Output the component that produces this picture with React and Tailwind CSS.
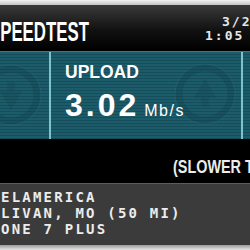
import React from "react";

/* ---------- decorative gauge marks ---------- */

function GaugeMark({ cx, cy, dir }) {
  const up = dir === "up";
  return (
    <svg
      className="pointer-events-none absolute left-0 top-0"
      width="200"
      height="88"
      viewBox="0 0 200 88"
    >
      <circle cx={cx} cy={cy} r="26" fill="none" stroke="#0f3a44" strokeOpacity="0.28" strokeWidth="7" />
      <circle cx={cx} cy={cy} r="30" fill="none" stroke="#4a9aab" strokeOpacity="0.12" strokeWidth="1" />
      {up ? (
        <path
          d={`M${cx} ${cy - 15} L${cx - 11} ${cy + 4} L${cx - 4} ${cy + 4} L${cx - 4} ${cy + 13} L${cx + 4} ${cy + 13} L${cx + 4} ${cy + 4} L${cx + 11} ${cy + 4} Z`}
          fill="#0f3a44"
          fillOpacity="0.22"
        />
      ) : (
        <path
          d={`M${cx} ${cy + 15} L${cx - 11} ${cy - 4} L${cx - 4} ${cy - 4} L${cx - 4} ${cy - 13} L${cx + 4} ${cy - 13} L${cx + 4} ${cy - 4} L${cx + 11} ${cy - 4} Z`}
          fill="#0f3a44"
          fillOpacity="0.22"
        />
      )}
    </svg>
  );
}

const scan =
  "bg-[repeating-linear-gradient(to_bottom,#1c5b6a_0px,#1c5b6a_2px,#164d5a_2px,#164d5a_3px)]";

export default function App() {
  return (
    <div className="flex h-[250px] w-[250px] flex-col overflow-hidden bg-black font-['Liberation_Sans',Arial,sans-serif]">
      {/* top light strip */}
      <div className="h-[5px] shrink-0 bg-[linear-gradient(to_bottom,#f2f2f2,#c4c4c4)]" />

      {/* header */}
      <div className="grid h-[46px] shrink-0 grid-cols-[205px_1fr] bg-[linear-gradient(to_bottom,#3a3a3a,#111_55%,#000)]">
        <div className="min-w-0 pt-[13px]">
          <span className="ml-[-11px] inline-block origin-left scale-x-[0.6] whitespace-nowrap text-[28px] font-bold leading-none text-white">
            SPEEDTEST
          </span>
        </div>
        <div className="whitespace-nowrap pt-[10px] font-['DejaVu_Sans_Mono',monospace] text-[13px] font-bold leading-[14px] tracking-[2px] text-[#e6e6e6]">
          <div className="ml-[17px]">3/21/17</div>
          <div>1:05 PM</div>
        </div>
      </div>

      {/* result panel */}
      <div className={`flex h-[88px] shrink-0 border-t border-[#2f7d8d] ${scan}`}>
        <div className="relative w-[49px] shrink-0 overflow-hidden">
          <GaugeMark cx={11} cy={43} dir="down" />
        </div>
        <div className="w-[2px] shrink-0 bg-[#7cc3d0]" />
        <div className="relative w-[190px] shrink-0 overflow-hidden pl-[14px] pt-[12px]">
          <GaugeMark cx={154} cy={42} dir="up" />
          <div className="relative text-[17.5px] font-bold leading-none text-white">UPLOAD</div>
          <div className="relative mt-[7px] flex items-baseline gap-[5px] text-white">
            <span className="text-[32px] font-bold leading-none tracking-[3px]">3.02</span>
            <span className="text-[16px] leading-none tracking-[1.5px]">Mb/s</span>
          </div>
        </div>
        <div className="w-[2px] shrink-0 bg-[#7cc3d0]" />
        <div className="flex-1" />
      </div>

      {/* comparison band */}
      <div className="h-[44px] shrink-0 bg-black pl-[173px] pt-[17px]">
        <span className="inline-block origin-left scale-x-[0.8] whitespace-nowrap text-[18px] font-bold leading-none text-[#ececec]">
          (SLOWER THAN
        </span>
      </div>

      {/* server info */}
      <div className="h-[62px] shrink-0 border-t border-[#5c5c5c] bg-[#3b3b3b] pl-[1px] pt-[5px] font-['DejaVu_Sans_Mono',monospace] text-[14px] font-bold leading-[16px] tracking-[2.2px] text-[#ececec]">
        <div className="whitespace-nowrap">ELAMERICA</div>
        <div className="whitespace-nowrap">LIVAN, MO (50 MI)</div>
        <div className="whitespace-nowrap">ONE 7 PLUS</div>
      </div>

      {/* bottom light strip */}
      <div className="h-[5px] shrink-0 bg-[linear-gradient(to_bottom,#9a9a9a,#e6e6e6)]" />
    </div>
  );
}
